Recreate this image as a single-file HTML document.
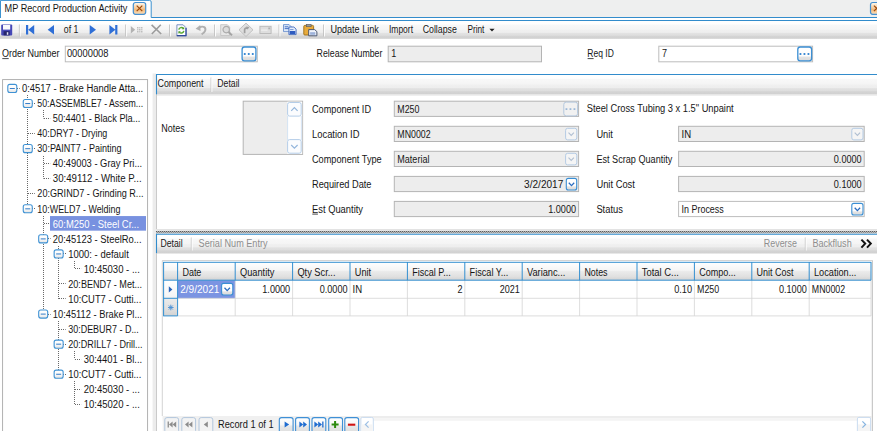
<!DOCTYPE html>
<html>
<head>
<meta charset="utf-8">
<title>MP Record Production Activity</title>
<style>
html,body{margin:0;padding:0;background:#ffffff;}
body{width:877px;height:431px;overflow:hidden;}
svg{display:block;font-family:"Liberation Sans",sans-serif;}
text{white-space:pre;}
</style>
</head>
<body>
<svg width="877" height="431" viewBox="0 0 877 431">
<defs>
<linearGradient id="gbar" x1="0" y1="0" x2="0" y2="1"><stop offset="0" stop-color="#ffffff"/><stop offset="0.17" stop-color="#ffffff"/><stop offset="0.22" stop-color="#f8f8f8"/><stop offset="0.46" stop-color="#f5f5f5"/><stop offset="0.52" stop-color="#f0f0f0"/><stop offset="0.64" stop-color="#eeeeee"/><stop offset="0.7" stop-color="#e2e2e2"/><stop offset="0.8" stop-color="#dedede"/><stop offset="0.86" stop-color="#d4d4d4"/><stop offset="1" stop-color="#d0d0d0"/></linearGradient><linearGradient id="gtab" x1="0" y1="0" x2="0" y2="1"><stop offset="0" stop-color="#ffffff"/><stop offset="0.68" stop-color="#f8f8f8"/><stop offset="0.74" stop-color="#e2e2e2"/><stop offset="1" stop-color="#d4d4d4"/></linearGradient><linearGradient id="ghdr" x1="0" y1="0" x2="0" y2="1"><stop offset="0" stop-color="#ffffff"/><stop offset="0.45" stop-color="#f5f5f5"/><stop offset="0.52" stop-color="#ebebeb"/><stop offset="0.8" stop-color="#e0e0e0"/><stop offset="1" stop-color="#d2d2d2"/></linearGradient><linearGradient id="gbtn" x1="0" y1="0" x2="0" y2="1"><stop offset="0" stop-color="#ffffff"/><stop offset="0.5" stop-color="#f6f6f6"/><stop offset="0.55" stop-color="#e8e8e8"/><stop offset="1" stop-color="#dedede"/></linearGradient><linearGradient id="gbtn2" x1="0" y1="0" x2="0" y2="1"><stop offset="0" stop-color="#ffffff"/><stop offset="0.66" stop-color="#fdfdfd"/><stop offset="0.72" stop-color="#e4e4e4"/><stop offset="1" stop-color="#dadada"/></linearGradient><linearGradient id="gbox" x1="0" y1="0" x2="0" y2="1"><stop offset="0" stop-color="#ffffff"/><stop offset="0.55" stop-color="#fafafa"/><stop offset="1" stop-color="#e2e2e2"/></linearGradient><linearGradient id="gclose" x1="0" y1="0" x2="0" y2="1"><stop offset="0" stop-color="#fffaf2"/><stop offset="0.25" stop-color="#fbe2c2"/><stop offset="0.5" stop-color="#f6c894"/><stop offset="0.56" stop-color="#f2b878"/><stop offset="1" stop-color="#fadfbe"/></linearGradient><pattern id="spl" x="156" y="230.9" width="2" height="2.4" patternUnits="userSpaceOnUse"><rect width="2" height="2.4" fill="#e6e6e6"/><rect x="0" y="0" width="1" height="1.2" fill="#4a4a4a"/><rect x="1" y="1.2" width="1" height="1.2" fill="#6a6a6a"/><rect x="1" y="0" width="1" height="1.2" fill="#b8b8b8"/></pattern>
</defs>
<rect x="0.00" y="0.00" width="877.00" height="17.00" fill="#eeefef" />
<rect x="0.00" y="18.00" width="877.00" height="3.00" fill="#ffffff" />
<rect x="0.00" y="0.00" width="151.20" height="20.00" fill="#ffffff" />
<line x1="151.20" y1="17.50" x2="877.00" y2="17.50" stroke="#328ccc" stroke-width="1.0" />
<path d="M0.5 18 V0.4 H149.6 Q151.2 0.4 151.2 2 V17.5" fill="none" stroke="#328ccc" stroke-width="0.95" />
<text x="4.60" y="11.90" fill="#161616" font-size="10.0" textLength="122.80" lengthAdjust="spacingAndGlyphs" >MP Record Production Activity</text>
<rect x="133.30" y="2.50" width="12.40" height="11.80" fill="url(#gclose)" stroke="#4690d0" stroke-width="1.2" rx="2.2" />
<path d="M136.70 5.60 L142.30 11.20 M142.30 5.60 L136.70 11.20" fill="none" stroke="#9c480c" stroke-width="1.2" />
<rect x="870.50" y="2.50" width="12.40" height="11.80" fill="url(#gclose)" stroke="#4690d0" stroke-width="1.2" rx="2.2" />
<path d="M873.90 5.60 L879.50 11.20 M879.50 5.60 L873.90 11.20" fill="none" stroke="#9c480c" stroke-width="1.2" />
<rect x="0.00" y="21.00" width="877.00" height="17.80" fill="url(#gbar)" />
<line x1="0.00" y1="20.50" x2="877.00" y2="20.50" stroke="#328ccc" stroke-width="1.0" />
<line x1="19.40" y1="24.50" x2="19.40" y2="36.50" stroke="#bdbdbd" stroke-width="0.9" />
<line x1="20.30" y1="24.50" x2="20.30" y2="36.50" stroke="#ffffff" stroke-width="0.9" />
<line x1="125.70" y1="24.50" x2="125.70" y2="36.50" stroke="#bdbdbd" stroke-width="0.9" />
<line x1="126.60" y1="24.50" x2="126.60" y2="36.50" stroke="#ffffff" stroke-width="0.9" />
<line x1="169.60" y1="24.50" x2="169.60" y2="36.50" stroke="#bdbdbd" stroke-width="0.9" />
<line x1="170.50" y1="24.50" x2="170.50" y2="36.50" stroke="#ffffff" stroke-width="0.9" />
<line x1="214.60" y1="24.50" x2="214.60" y2="36.50" stroke="#bdbdbd" stroke-width="0.9" />
<line x1="215.50" y1="24.50" x2="215.50" y2="36.50" stroke="#ffffff" stroke-width="0.9" />
<line x1="279.00" y1="24.50" x2="279.00" y2="36.50" stroke="#bdbdbd" stroke-width="0.9" />
<line x1="279.90" y1="24.50" x2="279.90" y2="36.50" stroke="#ffffff" stroke-width="0.9" />
<line x1="323.60" y1="24.50" x2="323.60" y2="36.50" stroke="#bdbdbd" stroke-width="0.9" />
<line x1="324.50" y1="24.50" x2="324.50" y2="36.50" stroke="#ffffff" stroke-width="0.9" />
<g transform="translate(1.2,24.4)"><rect x="0" y="0" width="11" height="11" rx="1" fill="#4648b6"/><rect x="1.8" y="0.6" width="7.2" height="4.6" fill="#fafafc"/><rect x="2.4" y="6.8" width="6" height="4.2" fill="#25256c"/><rect x="5.6" y="7.8" width="1.5" height="2.6" fill="#e0e0f4"/></g>
<path d="M26 25 h2.2 v9.4 h-2.2 z M34.2 25 v9.4 l-6 -4.7 z" fill="#2f6fd6" />
<path d="M54 25 v9.4 l-6.3 -4.7 z" fill="#2f6fd6" />
<text x="63.80" y="32.50" fill="#161616" font-size="10.0" textLength="14.60" lengthAdjust="spacingAndGlyphs" >of 1</text>
<path d="M89.7 25 v9.4 l6.3 -4.7 z" fill="#2f6fd6" />
<path d="M109.4 25 v9.4 l6 -4.7 z M115.2 25 h2.2 v9.4 h-2.2 z" fill="#2f6fd6" />
<path d="M130.8 26 v7.6 l4.4 -3.8 z" fill="#b2b2b2" />
<rect x="137.00" y="27.00" width="1.50" height="1.50" fill="#bdbdbd" />
<rect x="137.00" y="29.00" width="1.50" height="1.50" fill="#c9c9c9" />
<rect x="137.00" y="31.00" width="1.50" height="1.50" fill="#bdbdbd" />
<rect x="139.00" y="27.00" width="1.50" height="1.50" fill="#c9c9c9" />
<rect x="139.00" y="29.00" width="1.50" height="1.50" fill="#bdbdbd" />
<rect x="139.00" y="31.00" width="1.50" height="1.50" fill="#c9c9c9" />
<rect x="141.00" y="27.00" width="1.50" height="1.50" fill="#bdbdbd" />
<rect x="141.00" y="29.00" width="1.50" height="1.50" fill="#c9c9c9" />
<rect x="141.00" y="31.00" width="1.50" height="1.50" fill="#bdbdbd" />
<path d="M151.6 24.8 Q156 29 161.2 34 M160.8 24.8 Q156.4 29.4 151.8 34" fill="none" stroke="#9c9c9c" stroke-width="1.6" />
<g transform="translate(176.4,24.3)"><path d="M0.5 0.5 h6.2 l3 3 v8 h-9.2 z" fill="#fdfdff" stroke="#6a84bc" stroke-width="0.9"/><path d="M9.6 3.6 v7.8 h-9.2" stroke="#31499a" stroke-width="1.2" fill="none"/><path d="M2.4 5.4 a2.6 2.6 0 0 1 4.6 -1.2" stroke="#5cab35" stroke-width="1.5" fill="none"/><path d="M7.4 6.6 a2.6 2.6 0 0 1 -4.6 1.2" stroke="#5cab35" stroke-width="1.5" fill="none"/><path d="M7.8 2.6 v2.4 h-2.4 z M2 9.4 v-2.4 h2.4 z" fill="#4b9a2a"/></g>
<path d="M199.6 27.4 C203.4 25.4 206.2 27.6 205.2 30.6 C204.6 32.4 203.2 33.6 201.6 34.4" fill="none" stroke="#b0b0b0" stroke-width="1.9" />
<path d="M195.6 28.8 L200.2 25 L200.6 31 Z" fill="#b0b0b0" />
<g transform="translate(220.2,24.2)"><path d="M0.5 0.5 h6.6 l2.4 2.4 v8.4 h-9 z" fill="#e6e6e6" stroke="#c4c4c4" stroke-width="0.9"/><circle cx="6" cy="5.4" r="3.2" fill="#dcdcdc" stroke="#acacac" stroke-width="1.2"/><path d="M8.4 7.8 l3.4 3.4" stroke="#a4a4a4" stroke-width="2"/></g>
<g transform="translate(246,29.8)"><path d="M0 -6.7 L7 0 L0 6.7 L-7 0 Z" fill="#dfdfdf" stroke="#bcbcbc" stroke-width="0.9"/><path d="M-1.4 3.4 v-3.6 a1.8 1.8 0 0 1 3.2 -0.8" stroke="#a0a0a0" stroke-width="1.7" fill="none"/><path d="M0 -3.4 l3.4 0.6 l-2 2.6 z" fill="#a0a0a0"/></g>
<g transform="translate(259.5,25.9)"><rect x="0.4" y="0.4" width="11.2" height="7.2" fill="#dedede" stroke="#b8b8b8" stroke-width="0.9"/><path d="M1.6 4.2 h6.4" stroke="#f4f4f4" stroke-width="1"/><rect x="8.8" y="1.6" width="1.8" height="1.8" fill="#b0b0b0"/></g>
<g transform="translate(283.1,24.2)"><path d="M0.4 0.4 h5.6 l2.2 2.2 v4.8 h-7.8 z" fill="#dce8f8" stroke="#5f86c8" stroke-width="0.8"/><path d="M1.6 2.6 h3.6 M1.6 4.4 h4.8" stroke="#3a66c0" stroke-width="0.9"/><path d="M5.8 2.8 h5 l2.2 2.2 v5.4 h-7.2 z" fill="#e4eefb" stroke="#3f68bc" stroke-width="0.9"/><path d="M7 5.4 h3.4" stroke="#5a80c8" stroke-width="0.8"/><rect x="6.6" y="6.8" width="5.6" height="3" fill="#2f5cc0"/></g>
<g transform="translate(303.3,24)"><rect x="0.5" y="1.4" width="9.8" height="9.6" rx="1" fill="#e8ab3c" stroke="#9a6c14" stroke-width="0.9"/><rect x="3" y="0.3" width="4.8" height="2.4" fill="#9a9a9a" stroke="#5c5c5c" stroke-width="0.6"/><path d="M5.4 5.6 h6 l2.2 2 v4.2 h-8.2 z" fill="#f0f4fb" stroke="#3c4a68" stroke-width="0.9"/><rect x="6.8" y="8.2" width="5.2" height="2.6" fill="#9db2da"/></g>
<text x="330.40" y="32.80" fill="#161616" font-size="10.0" textLength="48.40" lengthAdjust="spacingAndGlyphs" >Update Link</text>
<text x="389.00" y="32.80" fill="#161616" font-size="10.0" textLength="24.00" lengthAdjust="spacingAndGlyphs" >Import</text>
<text x="422.70" y="32.80" fill="#161616" font-size="10.0" textLength="34.20" lengthAdjust="spacingAndGlyphs" >Collapse</text>
<text x="467.40" y="32.80" fill="#161616" font-size="10.0" textLength="17.00" lengthAdjust="spacingAndGlyphs" >Print</text>
<path d="M489.4 28.8 h5.2 l-2.6 2.8 z" fill="#202020" />
<text x="2.00" y="57.40" fill="#161616" font-size="10.0" textLength="57.50" lengthAdjust="spacingAndGlyphs" >Order Number</text>
<line x1="2.30" y1="58.60" x2="8.70" y2="58.60" stroke="#161616" stroke-width="0.8" />
<rect x="65.30" y="46.20" width="192.00" height="15.60" fill="#ffffff" stroke="#bdbdbd" stroke-width="1.0" />
<text x="66.90" y="57.40" fill="#161616" font-size="10.0" textLength="41.60" lengthAdjust="spacingAndGlyphs" >00000008</text>
<rect x="242.10" y="47.00" width="13.80" height="13.80" fill="url(#gbtn2)" stroke="#3b8fd4" stroke-width="1.3" rx="2.4" />
<rect x="243.85" y="53.10" width="1.80" height="1.80" fill="#2a7fd0" />
<rect x="247.85" y="53.10" width="1.80" height="1.80" fill="#2a7fd0" />
<rect x="251.85" y="53.10" width="1.80" height="1.80" fill="#2a7fd0" />
<text x="316.60" y="57.40" fill="#161616" font-size="10.0" textLength="65.80" lengthAdjust="spacingAndGlyphs" >Release Number</text>
<rect x="388.20" y="46.20" width="153.30" height="15.60" fill="#ededed" stroke="#b4b4b4" stroke-width="1.0" />
<text x="391.20" y="57.40" fill="#161616" font-size="10.0" textLength="5.02" lengthAdjust="spacingAndGlyphs" >1</text>
<text x="587.30" y="57.40" fill="#161616" font-size="10.0" textLength="26.50" lengthAdjust="spacingAndGlyphs" >Req ID</text>
<line x1="587.60" y1="58.60" x2="593.60" y2="58.60" stroke="#161616" stroke-width="0.8" />
<rect x="658.80" y="46.20" width="153.80" height="15.60" fill="#ffffff" stroke="#bdbdbd" stroke-width="1.0" />
<text x="661.90" y="57.40" fill="#161616" font-size="10.0" textLength="5.02" lengthAdjust="spacingAndGlyphs" >7</text>
<rect x="797.80" y="47.00" width="13.80" height="13.80" fill="url(#gbtn2)" stroke="#3b8fd4" stroke-width="1.3" rx="2.4" />
<rect x="799.55" y="53.10" width="1.80" height="1.80" fill="#2a7fd0" />
<rect x="803.55" y="53.10" width="1.80" height="1.80" fill="#2a7fd0" />
<rect x="807.55" y="53.10" width="1.80" height="1.80" fill="#2a7fd0" />
<rect x="2.60" y="79.60" width="145.00" height="360.00" fill="#ffffff" stroke="#a9a9a9" stroke-width="0.9" />
<g id="tree">
<line x1="27.50" y1="95.00" x2="27.50" y2="208.72" stroke="#686868" stroke-width="1" stroke-dasharray="1 1"/>
<line x1="43.50" y1="110.00" x2="43.50" y2="118.48" stroke="#686868" stroke-width="1" stroke-dasharray="1 1"/>
<line x1="43.50" y1="156.00" x2="43.50" y2="178.64" stroke="#686868" stroke-width="1" stroke-dasharray="1 1"/>
<line x1="43.50" y1="216.00" x2="43.50" y2="314.00" stroke="#686868" stroke-width="1" stroke-dasharray="1 1"/>
<line x1="58.50" y1="246.00" x2="58.50" y2="298.96" stroke="#686868" stroke-width="1" stroke-dasharray="1 1"/>
<line x1="74.50" y1="261.00" x2="74.50" y2="268.88" stroke="#686868" stroke-width="1" stroke-dasharray="1 1"/>
<line x1="58.50" y1="321.00" x2="58.50" y2="374.16" stroke="#686868" stroke-width="1" stroke-dasharray="1 1"/>
<line x1="74.50" y1="351.00" x2="74.50" y2="359.12" stroke="#686868" stroke-width="1" stroke-dasharray="1 1"/>
<line x1="74.50" y1="381.00" x2="74.50" y2="404.24" stroke="#686868" stroke-width="1" stroke-dasharray="1 1"/>
<line x1="17.00" y1="88.50" x2="19.70" y2="88.50" stroke="#686868" stroke-width="1" stroke-dasharray="1 1"/>
<rect x="7.80" y="84.40" width="9.00" height="8.10" fill="url(#gbox)" stroke="#3f92d4" stroke-width="1.1" rx="2" />
<line x1="9.80" y1="88.50" x2="14.80" y2="88.50" stroke="#3a80c8" stroke-width="1.05" />
<text x="21.90" y="92.20" fill="#161616" font-size="10.0" textLength="121.30" lengthAdjust="spacingAndGlyphs" >0:4517 - Brake Handle Atta...</text>
<line x1="32.00" y1="103.50" x2="35.15" y2="103.50" stroke="#686868" stroke-width="1" stroke-dasharray="1 1"/>
<rect x="23.25" y="99.44" width="9.00" height="8.10" fill="url(#gbox)" stroke="#3f92d4" stroke-width="1.1" rx="2" />
<line x1="25.25" y1="103.54" x2="30.25" y2="103.54" stroke="#3a80c8" stroke-width="1.05" />
<text x="37.35" y="107.24" fill="#161616" font-size="10.0" textLength="105.80" lengthAdjust="spacingAndGlyphs" >50:ASSEMBLE7 - Assem...</text>
<line x1="44.00" y1="118.50" x2="50.20" y2="118.50" stroke="#686868" stroke-width="1" stroke-dasharray="1 1"/>
<text x="52.80" y="122.28" fill="#161616" font-size="10.0" textLength="87.60" lengthAdjust="spacingAndGlyphs" >50:4401 - Black Pla...</text>
<line x1="28.00" y1="133.50" x2="34.75" y2="133.50" stroke="#686868" stroke-width="1" stroke-dasharray="1 1"/>
<text x="37.35" y="137.32" fill="#161616" font-size="10.0" textLength="70.00" lengthAdjust="spacingAndGlyphs" >40:DRY7 - Drying</text>
<line x1="32.00" y1="148.50" x2="35.15" y2="148.50" stroke="#686868" stroke-width="1" stroke-dasharray="1 1"/>
<rect x="23.25" y="144.56" width="9.00" height="8.10" fill="url(#gbox)" stroke="#3f92d4" stroke-width="1.1" rx="2" />
<line x1="25.25" y1="148.66" x2="30.25" y2="148.66" stroke="#3a80c8" stroke-width="1.05" />
<text x="37.35" y="152.36" fill="#161616" font-size="10.0" textLength="84.20" lengthAdjust="spacingAndGlyphs" >30:PAINT7 - Painting</text>
<line x1="44.00" y1="163.50" x2="50.20" y2="163.50" stroke="#686868" stroke-width="1" stroke-dasharray="1 1"/>
<text x="52.80" y="167.40" fill="#161616" font-size="10.0" textLength="89.40" lengthAdjust="spacingAndGlyphs" >40:49003 - Gray Pri...</text>
<line x1="44.00" y1="178.50" x2="50.20" y2="178.50" stroke="#686868" stroke-width="1" stroke-dasharray="1 1"/>
<text x="52.80" y="182.44" fill="#161616" font-size="10.0" textLength="88.80" lengthAdjust="spacingAndGlyphs" >30:49112 - White P...</text>
<line x1="28.00" y1="193.50" x2="34.75" y2="193.50" stroke="#686868" stroke-width="1" stroke-dasharray="1 1"/>
<text x="37.35" y="197.48" fill="#161616" font-size="10.0" textLength="106.10" lengthAdjust="spacingAndGlyphs" >20:GRIND7 - Grinding R...</text>
<line x1="32.00" y1="208.50" x2="35.15" y2="208.50" stroke="#686868" stroke-width="1" stroke-dasharray="1 1"/>
<rect x="23.25" y="204.72" width="9.00" height="8.10" fill="url(#gbox)" stroke="#3f92d4" stroke-width="1.1" rx="2" />
<line x1="25.25" y1="208.82" x2="30.25" y2="208.82" stroke="#3a80c8" stroke-width="1.05" />
<text x="37.35" y="212.52" fill="#161616" font-size="10.0" textLength="83.10" lengthAdjust="spacingAndGlyphs" >10:WELD7 - Welding</text>
<line x1="44.00" y1="223.50" x2="50.20" y2="223.50" stroke="#686868" stroke-width="1" stroke-dasharray="1 1"/>
<rect x="50.00" y="216.06" width="96.00" height="14.60" fill="#7891e0" />
<text x="52.80" y="227.56" fill="#ffffff" font-size="10.0" textLength="86.30" lengthAdjust="spacingAndGlyphs" >60:M250 - Steel Cr...</text>
<line x1="48.00" y1="238.50" x2="50.60" y2="238.50" stroke="#686868" stroke-width="1" stroke-dasharray="1 1"/>
<rect x="38.70" y="234.80" width="9.00" height="8.10" fill="url(#gbox)" stroke="#3f92d4" stroke-width="1.1" rx="2" />
<line x1="40.70" y1="238.90" x2="45.70" y2="238.90" stroke="#3a80c8" stroke-width="1.05" />
<text x="52.80" y="242.60" fill="#161616" font-size="10.0" textLength="88.80" lengthAdjust="spacingAndGlyphs" >20:45123 - SteelRo...</text>
<line x1="63.00" y1="253.50" x2="66.05" y2="253.50" stroke="#686868" stroke-width="1" stroke-dasharray="1 1"/>
<rect x="54.15" y="249.84" width="9.00" height="8.10" fill="url(#gbox)" stroke="#3f92d4" stroke-width="1.1" rx="2" />
<line x1="56.15" y1="253.94" x2="61.15" y2="253.94" stroke="#3a80c8" stroke-width="1.05" />
<text x="68.25" y="257.64" fill="#161616" font-size="10.0" textLength="60.60" lengthAdjust="spacingAndGlyphs" >1000: - default</text>
<line x1="75.00" y1="268.50" x2="81.10" y2="268.50" stroke="#686868" stroke-width="1" stroke-dasharray="1 1"/>
<text x="83.70" y="272.68" fill="#161616" font-size="10.0" textLength="56.20" lengthAdjust="spacingAndGlyphs" >10:45030 - ...</text>
<line x1="59.00" y1="283.50" x2="65.65" y2="283.50" stroke="#686868" stroke-width="1" stroke-dasharray="1 1"/>
<text x="68.25" y="287.72" fill="#161616" font-size="10.0" textLength="73.80" lengthAdjust="spacingAndGlyphs" >20:BEND7 - Met...</text>
<line x1="59.00" y1="298.50" x2="65.65" y2="298.50" stroke="#686868" stroke-width="1" stroke-dasharray="1 1"/>
<text x="68.25" y="302.76" fill="#161616" font-size="10.0" textLength="73.10" lengthAdjust="spacingAndGlyphs" >10:CUT7 - Cutti...</text>
<line x1="48.00" y1="314.50" x2="50.60" y2="314.50" stroke="#686868" stroke-width="1" stroke-dasharray="1 1"/>
<rect x="38.70" y="310.00" width="9.00" height="8.10" fill="url(#gbox)" stroke="#3f92d4" stroke-width="1.1" rx="2" />
<line x1="40.70" y1="314.10" x2="45.70" y2="314.10" stroke="#3a80c8" stroke-width="1.05" />
<text x="52.80" y="317.80" fill="#161616" font-size="10.0" textLength="89.40" lengthAdjust="spacingAndGlyphs" >10:45112 - Brake Pl...</text>
<line x1="59.00" y1="329.50" x2="65.65" y2="329.50" stroke="#686868" stroke-width="1" stroke-dasharray="1 1"/>
<text x="68.25" y="332.84" fill="#161616" font-size="10.0" textLength="70.60" lengthAdjust="spacingAndGlyphs" >30:DEBUR7 - D...</text>
<line x1="63.00" y1="344.50" x2="66.05" y2="344.50" stroke="#686868" stroke-width="1" stroke-dasharray="1 1"/>
<rect x="54.15" y="340.08" width="9.00" height="8.10" fill="url(#gbox)" stroke="#3f92d4" stroke-width="1.1" rx="2" />
<line x1="56.15" y1="344.18" x2="61.15" y2="344.18" stroke="#3a80c8" stroke-width="1.05" />
<text x="68.25" y="347.88" fill="#161616" font-size="10.0" textLength="74.20" lengthAdjust="spacingAndGlyphs" >20:DRILL7 - Drill...</text>
<line x1="75.00" y1="359.50" x2="81.10" y2="359.50" stroke="#686868" stroke-width="1" stroke-dasharray="1 1"/>
<text x="83.70" y="362.92" fill="#161616" font-size="10.0" textLength="58.50" lengthAdjust="spacingAndGlyphs" >30:4401 - Bl...</text>
<line x1="63.00" y1="374.50" x2="66.05" y2="374.50" stroke="#686868" stroke-width="1" stroke-dasharray="1 1"/>
<rect x="54.15" y="370.16" width="9.00" height="8.10" fill="url(#gbox)" stroke="#3f92d4" stroke-width="1.1" rx="2" />
<line x1="56.15" y1="374.26" x2="61.15" y2="374.26" stroke="#3a80c8" stroke-width="1.05" />
<text x="68.25" y="377.96" fill="#161616" font-size="10.0" textLength="73.10" lengthAdjust="spacingAndGlyphs" >10:CUT7 - Cutti...</text>
<line x1="75.00" y1="389.50" x2="81.10" y2="389.50" stroke="#686868" stroke-width="1" stroke-dasharray="1 1"/>
<text x="83.70" y="393.00" fill="#161616" font-size="10.0" textLength="56.20" lengthAdjust="spacingAndGlyphs" >20:45030 - ...</text>
<line x1="75.00" y1="404.50" x2="81.10" y2="404.50" stroke="#686868" stroke-width="1" stroke-dasharray="1 1"/>
<text x="83.70" y="408.04" fill="#161616" font-size="10.0" textLength="56.20" lengthAdjust="spacingAndGlyphs" >10:45020 - ...</text>
</g>
<rect x="152.60" y="73.50" width="3.40" height="360.00" fill="#ececec" />
<rect x="156.00" y="75.00" width="730.00" height="19.50" fill="url(#gbar)" />
<line x1="156.00" y1="74.50" x2="877.00" y2="74.50" stroke="#328ccc" stroke-width="1.1" />
<line x1="156.50" y1="74.00" x2="156.50" y2="94.60" stroke="#328ccc" stroke-width="1.1" />
<line x1="156.50" y1="94.60" x2="156.50" y2="229.50" stroke="#c4c4c4" stroke-width="0.9" />
<line x1="156.50" y1="229.50" x2="877.00" y2="229.50" stroke="#cccccc" stroke-width="0.8" />
<text x="157.50" y="87.30" fill="#161616" font-size="10.0" textLength="46.00" lengthAdjust="spacingAndGlyphs" >Component</text>
<line x1="157.00" y1="95.20" x2="877.00" y2="95.20" stroke="#e2e2e2" stroke-width="0.8" />
<line x1="211.00" y1="77.50" x2="211.00" y2="92.00" stroke="#c4c4c4" stroke-width="0.9" />
<line x1="211.90" y1="77.50" x2="211.90" y2="92.00" stroke="#ffffff" stroke-width="0.9" />
<text x="217.30" y="87.30" fill="#161616" font-size="10.0" textLength="22.20" lengthAdjust="spacingAndGlyphs" >Detail</text>
<text x="161.30" y="132.00" fill="#161616" font-size="10.0" textLength="23.50" lengthAdjust="spacingAndGlyphs" >Notes</text>
<rect x="243.20" y="101.20" width="59.40" height="53.20" fill="#ededed" stroke="#b4b4b4" stroke-width="1.0" />
<rect x="287.40" y="101.70" width="14.80" height="52.20" fill="#ffffff" />
<line x1="287.60" y1="116.00" x2="287.60" y2="140.00" stroke="#cfe0f2" stroke-width="0.9" />
<line x1="301.40" y1="116.00" x2="301.40" y2="140.00" stroke="#cfe0f2" stroke-width="0.9" />
<rect x="287.60" y="102.50" width="13.60" height="13.60" fill="#fbfcfe" stroke="#b4cde8" stroke-width="1" rx="2" />
<path d="M291.20 110.90 l3.2 -3.2 l3.2 3.2" fill="none" stroke="#94b6dc" stroke-width="1.2" />
<rect x="287.60" y="139.60" width="13.60" height="13.60" fill="#fbfcfe" stroke="#b4cde8" stroke-width="1" rx="2" />
<path d="M291.20 145.00 l3.2 3.2 l3.2 -3.2" fill="none" stroke="#94b6dc" stroke-width="1.2" />
<text x="312.00" y="112.70" fill="#161616" font-size="10.0" textLength="59.00" lengthAdjust="spacingAndGlyphs" >Component ID</text>
<rect x="394.30" y="101.20" width="184.30" height="15.20" fill="#ededed" stroke="#b4b4b4" stroke-width="1.0" />
<text x="312.00" y="137.80" fill="#161616" font-size="10.0" textLength="47.50" lengthAdjust="spacingAndGlyphs" >Location ID</text>
<rect x="394.30" y="126.30" width="184.30" height="15.20" fill="#ededed" stroke="#b4b4b4" stroke-width="1.0" />
<text x="312.00" y="162.80" fill="#161616" font-size="10.0" textLength="69.70" lengthAdjust="spacingAndGlyphs" >Component Type</text>
<rect x="394.30" y="151.30" width="184.30" height="15.20" fill="#ededed" stroke="#b4b4b4" stroke-width="1.0" />
<text x="312.00" y="187.90" fill="#161616" font-size="10.0" textLength="59.50" lengthAdjust="spacingAndGlyphs" >Required Date</text>
<rect x="394.30" y="176.40" width="184.30" height="15.20" fill="#ededed" stroke="#b4b4b4" stroke-width="1.0" />
<text x="312.00" y="212.90" fill="#161616" font-size="10.0" textLength="51.00" lengthAdjust="spacingAndGlyphs" >Est Quantity</text>
<rect x="394.30" y="201.40" width="184.30" height="15.20" fill="#ededed" stroke="#b4b4b4" stroke-width="1.0" />
<line x1="312.30" y1="214.10" x2="317.90" y2="214.10" stroke="#161616" stroke-width="0.8" />
<text x="397.30" y="112.70" fill="#161616" font-size="10.0" textLength="22.15" lengthAdjust="spacingAndGlyphs" >M250</text>
<rect x="563.80" y="102.10" width="13.80" height="13.80" fill="#f1f1f1" stroke="#b4c8de" stroke-width="1" rx="2.4" />
<rect x="565.55" y="108.20" width="1.80" height="1.80" fill="#9cb8d8" />
<rect x="569.55" y="108.20" width="1.80" height="1.80" fill="#9cb8d8" />
<rect x="573.55" y="108.20" width="1.80" height="1.80" fill="#9cb8d8" />
<text x="397.30" y="137.80" fill="#161616" font-size="10.0" textLength="33.31" lengthAdjust="spacingAndGlyphs" >MN0002</text>
<rect x="565.60" y="128.30" width="11.20" height="11.60" fill="#f5f5f5" stroke="#b4cbe4" stroke-width="1" rx="2" />
<path d="M568.50 132.70 l2.7 2.8 l2.7 -2.8" fill="none" stroke="#b0bfd2" stroke-width="1.1" />
<text x="397.30" y="162.80" fill="#161616" font-size="10.0" textLength="32.18" lengthAdjust="spacingAndGlyphs" >Material</text>
<rect x="565.60" y="153.30" width="11.20" height="11.60" fill="#f5f5f5" stroke="#b4cbe4" stroke-width="1" rx="2" />
<path d="M568.50 157.70 l2.7 2.8 l2.7 -2.8" fill="none" stroke="#b0bfd2" stroke-width="1.1" />
<text x="563.30" y="187.90" fill="#161616" font-size="10.0" text-anchor="end" textLength="39.20" lengthAdjust="spacingAndGlyphs" >3/2/2017</text>
<rect x="566.30" y="178.40" width="10.40" height="11.60" fill="url(#gbtn2)" stroke="#3b8fd4" stroke-width="1.1" rx="2" />
<path d="M568.80 182.80 l2.7 2.8 l2.7 -2.8" fill="none" stroke="#2a6cc0" stroke-width="1.3" />
<text x="576.10" y="212.90" fill="#161616" font-size="10.0" text-anchor="end" textLength="27.90" lengthAdjust="spacingAndGlyphs" >1.0000</text>
<text x="586.70" y="112.10" fill="#161616" font-size="10.0" textLength="147.00" lengthAdjust="spacingAndGlyphs" >Steel Cross Tubing 3 x 1.5&quot; Unpaint</text>
<text x="596.40" y="137.80" fill="#161616" font-size="10.0" textLength="16.50" lengthAdjust="spacingAndGlyphs" >Unit</text>
<text x="596.40" y="162.80" fill="#161616" font-size="10.0" textLength="76.00" lengthAdjust="spacingAndGlyphs" >Est Scrap Quantity</text>
<text x="596.40" y="187.90" fill="#161616" font-size="10.0" textLength="38.50" lengthAdjust="spacingAndGlyphs" >Unit Cost</text>
<text x="596.40" y="212.90" fill="#161616" font-size="10.0" textLength="26.50" lengthAdjust="spacingAndGlyphs" >Status</text>
<rect x="678.60" y="126.30" width="185.60" height="15.20" fill="#ededed" stroke="#b4b4b4" stroke-width="1.0" />
<text x="681.60" y="137.80" fill="#161616" font-size="10.0" textLength="9.57" lengthAdjust="spacingAndGlyphs" >IN</text>
<rect x="851.80" y="128.30" width="11.20" height="11.60" fill="#f5f5f5" stroke="#b4cbe4" stroke-width="1" rx="2" />
<path d="M854.70 132.70 l2.7 2.8 l2.7 -2.8" fill="none" stroke="#b0bfd2" stroke-width="1.1" />
<rect x="678.60" y="151.30" width="185.60" height="15.20" fill="#ededed" stroke="#b4b4b4" stroke-width="1.0" />
<text x="861.70" y="162.80" fill="#161616" font-size="10.0" text-anchor="end" textLength="27.90" lengthAdjust="spacingAndGlyphs" >0.0000</text>
<rect x="678.60" y="176.40" width="185.60" height="15.20" fill="#ededed" stroke="#b4b4b4" stroke-width="1.0" />
<text x="861.70" y="187.90" fill="#161616" font-size="10.0" text-anchor="end" textLength="27.90" lengthAdjust="spacingAndGlyphs" >0.1000</text>
<rect x="678.60" y="201.40" width="185.60" height="15.20" fill="#ffffff" stroke="#bdbdbd" stroke-width="1.0" />
<text x="681.60" y="212.90" fill="#161616" font-size="10.0" textLength="42.13" lengthAdjust="spacingAndGlyphs" >In Process</text>
<rect x="851.80" y="203.40" width="11.20" height="11.60" fill="url(#gbtn2)" stroke="#3b8fd4" stroke-width="1.1" rx="2" />
<path d="M854.70 207.80 l2.7 2.8 l2.7 -2.8" fill="none" stroke="#2a6cc0" stroke-width="1.3" />
<rect x="156.00" y="229.40" width="722.00" height="1.50" fill="#ececec" />
<rect x="156.00" y="230.90" width="722.00" height="2.40" fill="url(#spl)" />
<rect x="156.00" y="234.80" width="730.00" height="18.70" fill="url(#gbar)" />
<line x1="156.00" y1="234.30" x2="877.00" y2="234.30" stroke="#328ccc" stroke-width="1.1" />
<line x1="156.50" y1="233.80" x2="156.50" y2="253.40" stroke="#328ccc" stroke-width="1.1" />
<line x1="156.50" y1="253.40" x2="156.50" y2="431.00" stroke="#c4c4c4" stroke-width="0.9" />
<text x="160.40" y="246.80" fill="#161616" font-size="10.0" textLength="22.20" lengthAdjust="spacingAndGlyphs" >Detail</text>
<line x1="191.30" y1="237.50" x2="191.30" y2="250.50" stroke="#c4c4c4" stroke-width="0.9" />
<line x1="192.20" y1="237.50" x2="192.20" y2="250.50" stroke="#ffffff" stroke-width="0.9" />
<text x="198.60" y="246.80" fill="#8e8e8e" font-size="10.0" textLength="69.00" lengthAdjust="spacingAndGlyphs" >Serial Num Entry</text>
<text x="763.80" y="246.80" fill="#8e8e8e" font-size="10.0" textLength="33.20" lengthAdjust="spacingAndGlyphs" >Reverse</text>
<line x1="805.30" y1="237.50" x2="805.30" y2="250.50" stroke="#c4c4c4" stroke-width="0.9" />
<line x1="806.20" y1="237.50" x2="806.20" y2="250.50" stroke="#ffffff" stroke-width="0.9" />
<text x="812.40" y="246.80" fill="#8e8e8e" font-size="10.0" textLength="39.30" lengthAdjust="spacingAndGlyphs" >Backflush</text>
<path d="M861.4 239.6 l3.8 4 l-3.8 4 M867 239.6 l3.8 4 l-3.8 4" fill="none" stroke="#101010" stroke-width="2" />
<line x1="162.30" y1="260.40" x2="162.30" y2="416.00" stroke="#cfcfcf" stroke-width="0.9" />
<line x1="872.30" y1="260.40" x2="872.30" y2="431.00" stroke="#bcbcbc" stroke-width="1.0" />
<line x1="162.30" y1="260.50" x2="872.60" y2="260.50" stroke="#cfcfcf" stroke-width="0.9" />
<rect x="163.20" y="262.00" width="707.80" height="18.20" fill="url(#ghdr)" />
<rect x="163.20" y="280.20" width="14.40" height="35.70" fill="url(#ghdr)" />
<rect x="177.60" y="280.20" width="57.60" height="18.10" fill="#7b94e2" />
<line x1="235.20" y1="280.20" x2="235.20" y2="315.90" stroke="#d4d4d4" stroke-width="0.8" />
<line x1="292.60" y1="280.20" x2="292.60" y2="315.90" stroke="#d4d4d4" stroke-width="0.8" />
<line x1="350.00" y1="280.20" x2="350.00" y2="315.90" stroke="#d4d4d4" stroke-width="0.8" />
<line x1="407.40" y1="280.20" x2="407.40" y2="315.90" stroke="#d4d4d4" stroke-width="0.8" />
<line x1="464.80" y1="280.20" x2="464.80" y2="315.90" stroke="#d4d4d4" stroke-width="0.8" />
<line x1="522.20" y1="280.20" x2="522.20" y2="315.90" stroke="#d4d4d4" stroke-width="0.8" />
<line x1="579.60" y1="280.20" x2="579.60" y2="315.90" stroke="#d4d4d4" stroke-width="0.8" />
<line x1="637.00" y1="280.20" x2="637.00" y2="315.90" stroke="#d4d4d4" stroke-width="0.8" />
<line x1="694.40" y1="280.20" x2="694.40" y2="315.90" stroke="#d4d4d4" stroke-width="0.8" />
<line x1="751.80" y1="280.20" x2="751.80" y2="315.90" stroke="#d4d4d4" stroke-width="0.8" />
<line x1="809.20" y1="280.20" x2="809.20" y2="315.90" stroke="#d4d4d4" stroke-width="0.8" />
<line x1="871.00" y1="280.20" x2="871.00" y2="315.90" stroke="#d4d4d4" stroke-width="0.8" />
<line x1="177.60" y1="298.30" x2="871.00" y2="298.30" stroke="#d4d4d4" stroke-width="0.8" />
<line x1="177.60" y1="315.90" x2="871.00" y2="315.90" stroke="#d4d4d4" stroke-width="0.8" />
<line x1="163.20" y1="262.30" x2="871.00" y2="262.30" stroke="#338fd0" stroke-width="1" />
<line x1="163.20" y1="280.20" x2="871.00" y2="280.20" stroke="#338fd0" stroke-width="1" />
<line x1="163.60" y1="262.00" x2="163.60" y2="315.90" stroke="#338fd0" stroke-width="1" />
<line x1="177.60" y1="262.00" x2="177.60" y2="280.20" stroke="#338fd0" stroke-width="1" />
<line x1="235.20" y1="262.00" x2="235.20" y2="280.20" stroke="#338fd0" stroke-width="1" />
<line x1="292.60" y1="262.00" x2="292.60" y2="280.20" stroke="#338fd0" stroke-width="1" />
<line x1="350.00" y1="262.00" x2="350.00" y2="280.20" stroke="#338fd0" stroke-width="1" />
<line x1="407.40" y1="262.00" x2="407.40" y2="280.20" stroke="#338fd0" stroke-width="1" />
<line x1="464.80" y1="262.00" x2="464.80" y2="280.20" stroke="#338fd0" stroke-width="1" />
<line x1="522.20" y1="262.00" x2="522.20" y2="280.20" stroke="#338fd0" stroke-width="1" />
<line x1="579.60" y1="262.00" x2="579.60" y2="280.20" stroke="#338fd0" stroke-width="1" />
<line x1="637.00" y1="262.00" x2="637.00" y2="280.20" stroke="#338fd0" stroke-width="1" />
<line x1="694.40" y1="262.00" x2="694.40" y2="280.20" stroke="#338fd0" stroke-width="1" />
<line x1="751.80" y1="262.00" x2="751.80" y2="280.20" stroke="#338fd0" stroke-width="1" />
<line x1="809.20" y1="262.00" x2="809.20" y2="280.20" stroke="#338fd0" stroke-width="1" />
<line x1="871.00" y1="262.00" x2="871.00" y2="280.20" stroke="#338fd0" stroke-width="1" />
<line x1="177.60" y1="280.20" x2="177.60" y2="315.90" stroke="#338fd0" stroke-width="1" />
<line x1="163.20" y1="298.30" x2="177.60" y2="298.30" stroke="#338fd0" stroke-width="1" />
<line x1="163.20" y1="315.90" x2="177.60" y2="315.90" stroke="#338fd0" stroke-width="1" />
<text x="182.40" y="275.70" fill="#161616" font-size="10.0" textLength="18.98" lengthAdjust="spacingAndGlyphs" >Date</text>
<text x="240.00" y="275.70" fill="#161616" font-size="10.0" textLength="34.44" lengthAdjust="spacingAndGlyphs" >Quantity</text>
<text x="297.40" y="275.70" fill="#161616" font-size="10.0" textLength="38.09" lengthAdjust="spacingAndGlyphs" >Qty Scr...</text>
<text x="354.80" y="275.70" fill="#161616" font-size="10.0" textLength="16.35" lengthAdjust="spacingAndGlyphs" >Unit</text>
<text x="412.20" y="275.70" fill="#161616" font-size="10.0" textLength="38.50" lengthAdjust="spacingAndGlyphs" >Fiscal P...</text>
<text x="469.60" y="275.70" fill="#161616" font-size="10.0" textLength="38.73" lengthAdjust="spacingAndGlyphs" >Fiscal Y...</text>
<text x="527.00" y="275.70" fill="#161616" font-size="10.0" textLength="38.32" lengthAdjust="spacingAndGlyphs" >Varianc...</text>
<text x="584.40" y="275.70" fill="#161616" font-size="10.0" textLength="23.16" lengthAdjust="spacingAndGlyphs" >Notes</text>
<text x="641.80" y="275.70" fill="#161616" font-size="10.0" textLength="37.15" lengthAdjust="spacingAndGlyphs" >Total C...</text>
<text x="699.20" y="275.70" fill="#161616" font-size="10.0" textLength="36.70" lengthAdjust="spacingAndGlyphs" >Compo...</text>
<text x="756.60" y="275.70" fill="#161616" font-size="10.0" textLength="36.94" lengthAdjust="spacingAndGlyphs" >Unit Cost</text>
<text x="814.00" y="275.70" fill="#161616" font-size="10.0" textLength="42.32" lengthAdjust="spacingAndGlyphs" >Location...</text>
<text x="180.20" y="293.00" fill="#ffffff" font-size="10.0" textLength="39.20" lengthAdjust="spacingAndGlyphs" >2/9/2021</text>
<text x="290.20" y="293.00" fill="#161616" font-size="10.0" text-anchor="end" textLength="27.90" lengthAdjust="spacingAndGlyphs" >1.0000</text>
<text x="347.60" y="293.00" fill="#161616" font-size="10.0" text-anchor="end" textLength="27.90" lengthAdjust="spacingAndGlyphs" >0.0000</text>
<text x="352.60" y="293.00" fill="#161616" font-size="10.0" textLength="9.57" lengthAdjust="spacingAndGlyphs" >IN</text>
<text x="462.40" y="293.00" fill="#161616" font-size="10.0" text-anchor="end" textLength="5.02" lengthAdjust="spacingAndGlyphs" >2</text>
<text x="519.80" y="293.00" fill="#161616" font-size="10.0" text-anchor="end" textLength="20.09" lengthAdjust="spacingAndGlyphs" >2021</text>
<text x="692.00" y="293.00" fill="#161616" font-size="10.0" text-anchor="end" textLength="17.86" lengthAdjust="spacingAndGlyphs" >0.10</text>
<text x="697.00" y="293.00" fill="#161616" font-size="10.0" textLength="22.15" lengthAdjust="spacingAndGlyphs" >M250</text>
<text x="806.80" y="293.00" fill="#161616" font-size="10.0" text-anchor="end" textLength="27.90" lengthAdjust="spacingAndGlyphs" >0.1000</text>
<text x="811.80" y="293.00" fill="#161616" font-size="10.0" textLength="33.31" lengthAdjust="spacingAndGlyphs" >MN0002</text>
<rect x="221.60" y="283.40" width="11.20" height="11.60" fill="url(#gbtn2)" stroke="#3b8fd4" stroke-width="1.1" rx="2" />
<path d="M224.50 287.80 l2.7 2.8 l2.7 -2.8" fill="none" stroke="#2a6cc0" stroke-width="1.3" />
<path d="M168.80 286.20 v6.4 l3.6 -3.2 z" fill="#2a62b8" />
<path d="M167.99999999999997 307.5 h5.6 M170.79999999999998 304.7 v5.6 M168.79999999999998 305.5 l4 4 M172.79999999999998 305.5 l-4 4" fill="none" stroke="#4a90d6" stroke-width="0.9" />
<rect x="162.70" y="416.00" width="709.10" height="2.40" fill="#ededed" />
<rect x="162.70" y="418.40" width="709.10" height="2.40" fill="#f4f4f4" />
<rect x="162.70" y="416.00" width="198.30" height="16.00" fill="#f0f0f0" />
<rect x="164.80" y="417.60" width="13.80" height="15.00" fill="#f3f3f3" stroke="#b2c6dc" stroke-width="1" rx="2.2" />
<rect x="181.80" y="417.60" width="13.80" height="15.00" fill="#f3f3f3" stroke="#b2c6dc" stroke-width="1" rx="2.2" />
<rect x="199.00" y="417.60" width="13.80" height="15.00" fill="#f3f3f3" stroke="#b2c6dc" stroke-width="1" rx="2.2" />
<rect x="279.30" y="417.60" width="13.80" height="15.00" fill="url(#gbtn)" stroke="#3f90d6" stroke-width="1.1" rx="2.2" />
<rect x="295.60" y="417.60" width="13.80" height="15.00" fill="url(#gbtn)" stroke="#3f90d6" stroke-width="1.1" rx="2.2" />
<rect x="312.00" y="417.60" width="13.80" height="15.00" fill="url(#gbtn)" stroke="#3f90d6" stroke-width="1.1" rx="2.2" />
<rect x="328.70" y="417.60" width="13.80" height="15.00" fill="url(#gbtn)" stroke="#3f90d6" stroke-width="1.1" rx="2.2" />
<rect x="344.80" y="417.60" width="13.80" height="15.00" fill="url(#gbtn)" stroke="#3f90d6" stroke-width="1.1" rx="2.2" />
<rect x="167.60" y="421.50" width="1.30" height="6.00" fill="#8c8c8c" />
<path d="M172.60 421.40 v6.2 l-3.60 -3.1 z" fill="#8c8c8c" />
<path d="M176.20 421.40 v6.2 l-3.60 -3.1 z" fill="#8c8c8c" />
<path d="M188.60 421.40 v6.2 l-3.60 -3.1 z" fill="#8c8c8c" />
<path d="M192.40 421.40 v6.2 l-3.60 -3.1 z" fill="#8c8c8c" />
<path d="M207.80 421.40 v6.2 l-4.00 -3.1 z" fill="#8c8c8c" />
<text x="218.00" y="428.40" fill="#161616" font-size="10.0" textLength="55.60" lengthAdjust="spacingAndGlyphs" >Record 1 of 1</text>
<path d="M284.60 421.40 v6.2 l4.60 -3.1 z" fill="#1f6cd0" />
<path d="M299.40 421.40 v6.2 l3.80 -3.1 z" fill="#1f6cd0" />
<path d="M303.20 421.40 v6.2 l3.80 -3.1 z" fill="#1f6cd0" />
<path d="M314.40 421.40 v6.2 l3.80 -3.1 z" fill="#1f6cd0" />
<path d="M318.20 421.40 v6.2 l3.80 -3.1 z" fill="#1f6cd0" />
<rect x="322.20" y="421.50" width="1.30" height="6.00" fill="#1f6cd0" />
<path d="M331.6 424.5 h7 M335.1 421.0 v7" fill="none" stroke="#2d8a10" stroke-width="2" />
<path d="M347.9 424.7 h7.4" fill="none" stroke="#d01414" stroke-width="2.1" />
<rect x="360.90" y="417.40" width="12.40" height="15.00" fill="#ffffff" stroke="#c4d8ee" stroke-width="0.9" rx="1.5" />
<rect x="361.50" y="424.40" width="11.20" height="8.00" fill="#f5f5f5" />
<path d="M368.6 421.3 l-3.2 3.2 l3.2 3.2" fill="none" stroke="#9cbfe4" stroke-width="1.2" />
<rect x="857.40" y="417.40" width="13.20" height="15.00" fill="#ffffff" stroke="#c4d8ee" stroke-width="0.9" rx="1.5" />
<rect x="858.00" y="424.40" width="12.00" height="8.00" fill="#f5f5f5" />
<path d="M862.4 421.3 l3.2 3.2 l-3.2 3.2" fill="none" stroke="#86b4e0" stroke-width="1.2" />
</svg>
</body>
</html>
